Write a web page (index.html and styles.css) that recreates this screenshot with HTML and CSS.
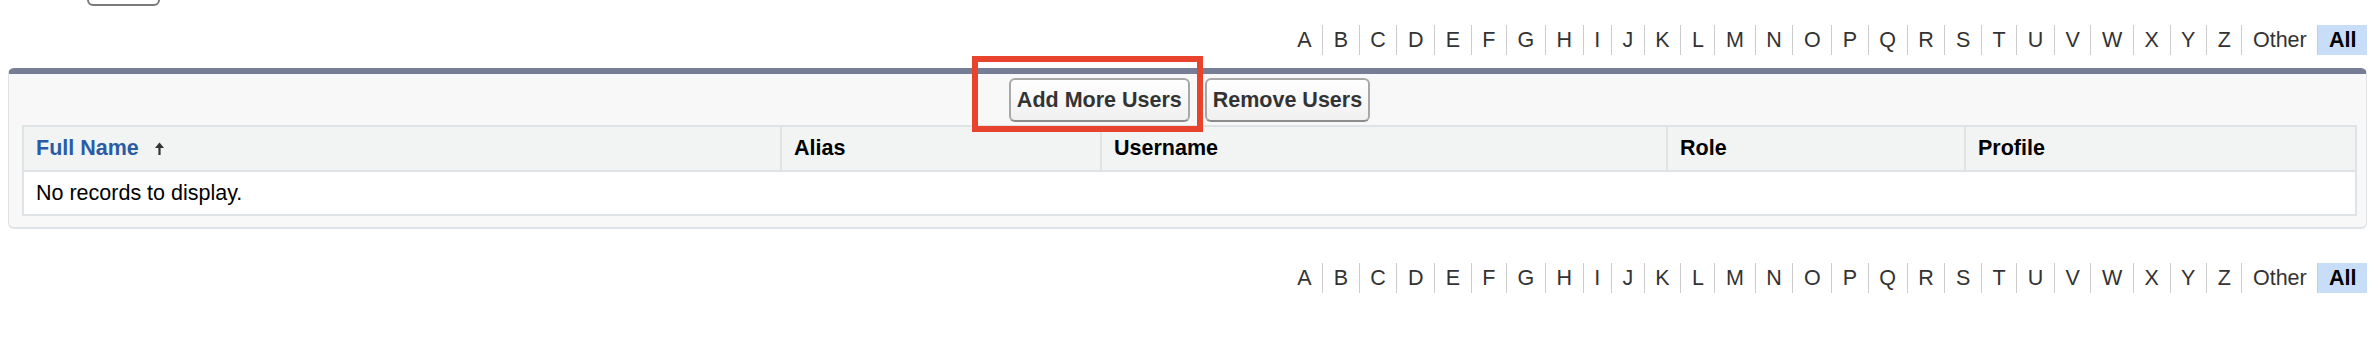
FILE: index.html
```html
<!DOCTYPE html>
<html>
<head>
<meta charset="utf-8">
<title>Users</title>
<link rel="stylesheet" href="styles.css">
</head>
<body>
<div class="page">
  <div class="top-strip"><span class="cut-btn"></span></div>

  <div class="rolodex top">
    <span class="lt">A</span><span class="lt">B</span><span class="lt">C</span><span class="lt">D</span><span class="lt">E</span><span class="lt">F</span><span class="lt">G</span><span class="lt">H</span><span class="lt">I</span><span class="lt">J</span><span class="lt">K</span><span class="lt">L</span><span class="lt">M</span><span class="lt">N</span><span class="lt">O</span><span class="lt">P</span><span class="lt">Q</span><span class="lt">R</span><span class="lt">S</span><span class="lt">T</span><span class="lt">U</span><span class="lt">V</span><span class="lt">W</span><span class="lt">X</span><span class="lt">Y</span><span class="lt">Z</span><span class="lt">Other</span><span class="lt all">All</span>
  </div>

  <div class="panel">
    <div class="panel-buttons">
      <span class="callout-wrap">
        <button class="btn">Add More Users</button>
        <span class="callout"></span>
      </span>
      <button class="btn">Remove Users</button>
    </div>
    <table class="list">
      <colgroup>
        <col class="c-name"><col class="c-alias"><col class="c-user"><col class="c-role"><col class="c-profile">
      </colgroup>
      <thead>
        <tr>
          <th class="first"><span class="sort-link">Full Name</span><svg class="sort-arrow" width="11" height="15" viewBox="0 0 11 15"><path d="M5.5 14V4" stroke="#333" stroke-width="2.2" fill="none"/><path d="M1 7L5.5 1.5L10 7Z" fill="#333"/></svg></th>
          <th>Alias</th>
          <th>Username</th>
          <th>Role</th>
          <th>Profile</th>
        </tr>
      </thead>
      <tbody>
        <tr><td colspan="5">No records to display.</td></tr>
      </tbody>
    </table>
  </div>

  <div class="rolodex bottom">
    <span class="lt">A</span><span class="lt">B</span><span class="lt">C</span><span class="lt">D</span><span class="lt">E</span><span class="lt">F</span><span class="lt">G</span><span class="lt">H</span><span class="lt">I</span><span class="lt">J</span><span class="lt">K</span><span class="lt">L</span><span class="lt">M</span><span class="lt">N</span><span class="lt">O</span><span class="lt">P</span><span class="lt">Q</span><span class="lt">R</span><span class="lt">S</span><span class="lt">T</span><span class="lt">U</span><span class="lt">V</span><span class="lt">W</span><span class="lt">X</span><span class="lt">Y</span><span class="lt">Z</span><span class="lt">Other</span><span class="lt all">All</span>
  </div>
</div>
</body>
</html>
```

FILE: styles.css
```css
html, body {
  margin: 0;
  padding: 0;
  background: #ffffff;
}

body {
  font-family: "Liberation Sans", Arial, sans-serif;
  color: #000;
}

.page {
  padding: 0 11px 0 8px;
}

.top-strip {
  display: flex;
  height: 6px;
  padding-left: 79px;
}

.cut-btn {
  display: block;
  width: 73px;
  height: 30px;
  margin-top: -24px;
  box-sizing: border-box;
  border: 2px solid #7a7a7a;
  border-radius: 6px;
  background: #fff;
}

.rolodex {
  display: flex;
  justify-content: flex-end;
  height: 30px;
  font-size: 21.5px;
  line-height: 30px;
  color: #333;
}

.rolodex.top {
  margin-top: 19px;
}

.rolodex.bottom {
  margin-top: 34px;
}

.lt {
  padding: 0 10.6px;
  border-left: 1px solid #cccccc;
}

.lt:first-child {
  border-left: none;
}

.lt.all {
  background: #c8ddf7;
  color: #000;
  font-weight: bold;
}

.panel {
  margin-top: 13px;
  background: #f8f8f8;
  border: 1px solid #e0e3e5;
  border-bottom-width: 2px;
  border-top: 6px solid #767e96;
  border-radius: 6px;
  padding: 4px 9px 11px 13px;
}

.panel-buttons {
  display: flex;
  justify-content: center;
  gap: 15px;
  margin-bottom: 3px;
}

.callout-wrap {
  position: relative;
  display: flex;
}

.callout {
  position: absolute;
  left: -37px;
  top: -22px;
  width: 231px;
  height: 76px;
  box-sizing: border-box;
  border: 6px solid #e8432d;
}

.btn {
  height: 44px;
  padding: 0 6px;
  margin: 0;
  font-family: "Liberation Sans", Arial, sans-serif;
  font-size: 21.5px;
  font-weight: bold;
  color: #333;
  background: linear-gradient(#ffffff, #f0f0f0);
  border: 2px solid #a8a8a8;
  border-bottom-color: #8c8c8c;
  border-radius: 6px;
}

.list {
  width: 100%;
  table-layout: fixed;
  border-collapse: separate;
  border-spacing: 0;
  border: 2px solid #e0e3e5;
  background: #ffffff;
  font-size: 21.5px;
}

.c-name { width: 756px; }
.c-alias { width: 320px; }
.c-user { width: 566px; }
.c-role { width: 298px; }
.c-profile { width: auto; }

.list th {
  height: 43px;
  padding: 0 12px;
  text-align: left;
  vertical-align: middle;
  background: #f2f3f3;
  color: #000;
  font-weight: bold;
  border-bottom: 2px solid #e0e3e5;
  border-left: 2px solid #e0e3e5;
  white-space: nowrap;
}

.list th.first {
  border-left: none;
}

.sort-link {
  color: #2a5ca6;
}

.sort-arrow {
  margin-left: 15px;
  vertical-align: -1px;
}

.list td {
  height: 42px;
  padding: 0 12px;
    vertical-align: middle;
  color: #000;
}
```
